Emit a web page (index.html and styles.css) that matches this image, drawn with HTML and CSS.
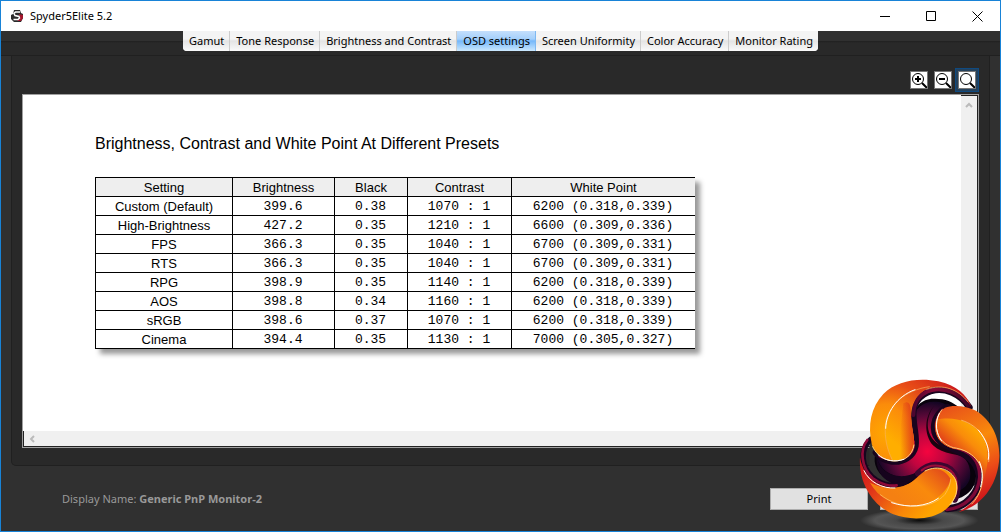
FILE: index.html
```
<!DOCTYPE html>
<html lang="en">
<head>
  <meta charset="UTF-8">
  <meta name="viewport" content="width=device-width, initial-scale=1.0">
  <title>Spyder5Elite 5.2</title>
  <link rel="stylesheet" href="styles.css">
</head>
<body>
  <div class="window">
    <header class="titlebar">
      <svg class="app-icon" viewBox="0 0 14 14">
        <path d="M4 1h6l1 3 2 1v4l-2 4H4L1 10V6l2-1z" fill="#2b2b2b"/>
        <path d="M9 5l4 1v3l-2 3H7l3-2z" fill="#a3152c"/>
        <path d="M10 3H5.500L4 4.500 5 6.500l4 1 .5 1.500L8 10.500H3.500" fill="none" stroke="#fff" stroke-width="1.500"/>
      </svg>
      <h1 class="app-name">Spyder5Elite 5.2</h1>
      <button class="win-btn" aria-label="Minimize">
        <svg viewBox="0 0 11 11"><path d="M0 5.500h10"/></svg>
      </button>
      <button class="win-btn" aria-label="Maximize">
        <svg viewBox="0 0 11 11"><path d="M.5.5h9v9h-9z"/></svg>
      </button>
      <button class="win-btn" aria-label="Close window">
        <svg viewBox="0 0 11 11"><path d="M.5.5l10 10M10.500.5l-10 10"/></svg>
      </button>
    </header>

    <nav class="tab-strip">
      <div class="tabs">
        <button class="tab">Gamut</button>
        <button class="tab">Tone Response</button>
        <button class="tab">Brightness and Contrast</button>
        <button class="tab active">OSD settings</button>
        <button class="tab">Screen Uniformity</button>
        <button class="tab">Color Accuracy</button>
        <button class="tab">Monitor Rating</button>
      </div>
    </nav>

    <main class="panel">
      <div class="tools">
        <button class="tool" aria-label="Zoom in">
          <svg viewBox="0 0 16 16"><circle cx="7" cy="7" r="5.500"/><path d="M11 11l5 5" class="thick"/><path d="M4 7h6M7 4v6" class="thick"/></svg>
        </button>
        <button class="tool" aria-label="Zoom out">
          <svg viewBox="0 0 16 16"><circle cx="7" cy="7" r="5.500"/><path d="M11 11l5 5" class="thick"/><path d="M4 7h6" class="thick"/></svg>
        </button>
        <button class="tool selected" aria-label="Zoom to fit">
          <svg viewBox="0 0 16 16"><circle cx="7" cy="7" r="5.500"/><path d="M11 11l5 5" class="thick"/></svg>
        </button>
      </div>

      <div class="viewer">
        <section class="report">
          <h2 class="report-title">Brightness, Contrast and White Point At Different Presets</h2>
          <table class="results">
            <colgroup>
              <col class="col-setting">
              <col class="col-brightness">
              <col class="col-black">
              <col class="col-contrast">
              <col class="col-white">
            </colgroup>
            <thead>
              <tr><th>Setting</th><th>Brightness</th><th>Black</th><th>Contrast</th><th>White Point</th></tr>
            </thead>
            <tbody>
              <tr><th>Custom (Default)</th><td>399.6</td><td>0.38</td><td>1070 : 1</td><td>6200 (0.318,0.339)</td></tr>
              <tr><th>High-Brightness</th><td>427.2</td><td>0.35</td><td>1210 : 1</td><td>6600 (0.309,0.336)</td></tr>
              <tr><th>FPS</th><td>366.3</td><td>0.35</td><td>1040 : 1</td><td>6700 (0.309,0.331)</td></tr>
              <tr><th>RTS</th><td>366.3</td><td>0.35</td><td>1040 : 1</td><td>6700 (0.309,0.331)</td></tr>
              <tr><th>RPG</th><td>398.9</td><td>0.35</td><td>1140 : 1</td><td>6200 (0.318,0.339)</td></tr>
              <tr><th>AOS</th><td>398.8</td><td>0.34</td><td>1160 : 1</td><td>6200 (0.318,0.339)</td></tr>
              <tr><th>sRGB</th><td>398.6</td><td>0.37</td><td>1070 : 1</td><td>6200 (0.318,0.339)</td></tr>
              <tr><th>Cinema</th><td>394.4</td><td>0.35</td><td>1130 : 1</td><td>7000 (0.305,0.327)</td></tr>
            </tbody>
          </table>
        </section>
        <div class="scroll-v">
          <svg viewBox="0 0 8 8"><path d="M1 6l3-3 3 3"/></svg>
        </div>
        <div class="scroll-h">
          <svg viewBox="0 0 8 8"><path d="M6 1L3 4l3 3"/></svg>
        </div>
      </div>
    </main>

    <footer class="footer">
      <p class="display-name">Display Name: <b>Generic PnP Monitor-2</b></p>
      <button class="btn">Print</button>
      <button class="btn" aria-label="Close"></button>
    </footer>
  </div>

  <svg class="logo" viewBox="0 0 453 486">
    <defs>
      <radialGradient id="core" gradientUnits="userSpaceOnUse" cx="232" cy="245" r="150">
        <stop offset="0" stop-color="#f5043f"/>
        <stop offset=".35" stop-color="#c0053f"/>
        <stop offset=".7" stop-color="#5c0838"/>
        <stop offset="1" stop-color="#150524"/>
      </radialGradient>
      <radialGradient id="floor">
        <stop offset="0" stop-color="#0c0c0c"/>
        <stop offset=".4" stop-color="#484848"/>
        <stop offset=".75" stop-color="#555"/>
        <stop offset="1" stop-color="#555" stop-opacity="0"/>
      </radialGradient>
      <!-- blades go from amber inside to red at the outer edge -->
      <radialGradient id="blade1" gradientUnits="userSpaceOnUse" cx="110" cy="190" r="250">
        <stop offset="0" stop-color="#ffa800"/>
        <stop offset=".35" stop-color="#fb8c0a"/>
        <stop offset=".6" stop-color="#e94f17"/>
        <stop offset="1" stop-color="#cc1a1c"/>
      </radialGradient>
      <linearGradient id="edge2" gradientUnits="userSpaceOnUse" x1="290" y1="110" x2="420" y2="390">
        <stop offset="0" stop-color="#e8501a"/>
        <stop offset=".4" stop-color="#f98a0b"/>
        <stop offset=".7" stop-color="#ec4c18"/>
        <stop offset="1" stop-color="#cc0f1a"/>
      </linearGradient>
      <linearGradient id="edge3" gradientUnits="userSpaceOnUse" x1="30" y1="280" x2="220" y2="450">
        <stop offset="0" stop-color="#cf101b"/>
        <stop offset=".35" stop-color="#e23a19"/>
        <stop offset=".75" stop-color="#f98708"/>
        <stop offset="1" stop-color="#ffa400"/>
      </linearGradient>
      <linearGradient id="face1" gradientUnits="userSpaceOnUse" x1="110" y1="200" x2="215" y2="70">
        <stop offset="0" stop-color="#ffae00"/>
        <stop offset=".5" stop-color="#fb8c0a"/>
        <stop offset="1" stop-color="#e2461a"/>
      </linearGradient>
      <linearGradient id="shade1" gradientUnits="userSpaceOnUse" x1="150" y1="200" x2="200" y2="200">
        <stop offset="0" stop-color="#dc2f1a" stop-opacity="0"/>
        <stop offset="1" stop-color="#dc2f1a"/>
      </linearGradient>
      <linearGradient id="face2" gradientUnits="userSpaceOnUse" x1="380" y1="165" x2="310" y2="240">
        <stop offset="0" stop-color="#ffae00"/>
        <stop offset=".5" stop-color="#f98c0a"/>
        <stop offset="1" stop-color="#e2441a"/>
      </linearGradient>
      <linearGradient id="face3" gradientUnits="userSpaceOnUse" x1="270" y1="300" x2="170" y2="410">
        <stop offset="0" stop-color="#e4501a"/>
        <stop offset=".5" stop-color="#f98a0c"/>
        <stop offset="1" stop-color="#f58012"/>
      </linearGradient>
      <linearGradient id="rim1" gradientUnits="userSpaceOnUse" x1="190" y1="120" x2="365" y2="100">
        <stop offset="0" stop-color="#4c0630"/>
        <stop offset=".4" stop-color="#8a0a38"/>
        <stop offset="1" stop-color="#3a0526"/>
      </linearGradient>
    </defs>

    <ellipse cx="208" cy="451" rx="178" ry="34" fill="url(#floor)"/>

    <!-- openings between the blades -->
    <path d="M215 95C240 60 310 60 336 112C300 112 265 108 215 95Z" fill="#fff"/>
    <path d="M58 215H85V300H58Z" fill="#303030"/>
    <path d="M305 403L320 370 375 345 382 390 330 410Z" fill="#e9e9e9"/>

    <!-- black depth and hub -->
    <path d="M190 150C188 112 215 86 250 86C285 85 308 96 325 110L270 130L268 200L340 250C375 275 387 312 372 345C360 370 342 380 318 388L310 320L250 300L185 342C135 352 88 325 76 285C72 270 74 256 78 245L150 275L195 230Z" fill="#08020c"/>
    <path d="M190 145C195 115 220 94 252 95C275 95 285 100 292 110C255 120 243 145 246 175C250 215 285 240 320 250C350 262 365 290 360 325C354 345 340 358 326 362C325 325 300 298 262 292C215 288 205 325 160 322C122 320 88 298 78 258C100 276 135 283 165 272C198 258 196 220 190 190Z" fill="url(#core)"/>
    <path d="M252 108C225 145 225 198 268 224C300 242 340 238 362 268C325 250 280 256 249 226C220 192 224 138 252 108Z" fill="#19030f"/>
    <path d="M80 255C85 300 122 322 165 318C205 314 215 285 255 283C215 290 205 340 150 345C100 340 75 300 80 255Z" fill="#16041d"/>

    <!-- rims under the blade edges -->
    <g fill="none" stroke-linecap="round">
      <path d="M358 112C330 70 285 52 245 62C205 75 186 105 190 145C192 180 200 200 196 228C190 258 160 278 126 274C105 272 88 262 78 248" stroke="#18041e" stroke-width="20"/>
      <path d="M355 108C328 68 285 52 245 60C208 70 190 98 190 135" stroke="url(#rim1)" stroke-width="12"/>
      <path d="M190 215C194 258 150 282 90 258" stroke="#a10b36" stroke-width="10"/>
      <path d="M292 112C248 135 240 188 275 218C315 245 378 252 388 315C390 365 350 415 292 416" stroke="#18041e" stroke-width="21"/>
      <path d="M278 121C245 160 255 210 308 231C360 240 390 270 389 322C385 375 345 413 290 419" stroke="#7d0937" stroke-width="10"/>
      <path d="M62 208C28 240 35 290 66 320C98 348 140 352 165 342" stroke="#18041e" stroke-width="16"/>
      <path d="M52 210C28 240 34 294 68 325C90 342 120 350 140 346" stroke="#8c0a38" stroke-width="8"/>
      <path d="M205 310C245 270 305 282 319 325C325 350 322 370 314 388" stroke="#3c0730" stroke-width="20"/>
      <path d="M215 301C250 274 304 288 318 325C323 345 321 365 315 380" stroke="#9c0c39" stroke-width="6"/>
    </g>

    <!-- upper left blade -->
    <path d="M66 225C52 165 63 112 100 72C140 32 205 22 265 34C320 46 350 75 364 110C335 66 292 47 248 52C205 62 180 98 183 145C184 180 197 205 190 232C184 258 158 275 126 272C96 268 76 250 66 225Z" fill="url(#blade1)"/>
    <path d="M126 270C106 225 98 160 118 118C142 72 195 48 242 52C204 64 181 100 184 148C186 184 196 205 190 232C184 258 158 275 126 270Z" fill="url(#face1)"/>
    <path d="M160 100C185 85 182 120 184 148C186 184 196 205 190 232C184 258 158 275 140 270Z" fill="url(#shade1)"/>

    <!-- right blade -->
    <path d="M285 113C310 103 350 108 378 122C425 150 450 205 448 262C444 345 395 410 326 426C372 402 400 360 397 318C394 265 360 243 322 238C280 232 252 205 256 165C259 140 268 124 285 113Z" fill="url(#edge2)"/>
    <path d="M258 150C305 138 360 150 390 190C415 222 422 270 400 330C396 270 360 244 322 238C280 232 250 205 258 150Z" fill="url(#face2)"/>

    <!-- lower blade -->
    <path d="M30 262C38 315 80 352 130 354C180 354 200 318 225 303C260 284 305 298 319 332C330 368 310 400 284 421C245 450 180 452 130 433C65 405 25 335 30 262Z" fill="url(#edge3)"/>
    <path d="M60 338C115 366 175 353 205 320C240 284 285 292 302 328C290 375 235 411 175 408C130 403 85 384 60 338Z" fill="url(#face3)"/>

    <!-- highlights -->
    <g fill="none" stroke-linecap="round">
      <path d="M126 268C110 235 104 205 106 165C114 105 165 60 238 50" stroke="#f9b45a" stroke-width="2"/>
      <path d="M107 175C108 130 140 78 195 59" stroke="#fff" stroke-width="3"/>
      <path d="M68 230C85 268 130 285 168 264C182 255 190 240 192 225" stroke="#ffd879" stroke-width="3"/>
      <path d="M84 254C105 273 135 277 162 268" stroke="#fff" stroke-width="3"/>
      <path d="M230 58C280 40 325 58 354 96" stroke="#ffc46b" stroke-width="2"/>
      <path d="M335 151C385 165 424 215 416 275" stroke="#ffd27e" stroke-width="2"/>
      <path d="M385 180C410 210 420 240 415 268" stroke="#fff" stroke-width="3"/>
      <path d="M276 119C242 160 260 218 310 233C365 240 405 280 397 335C393 365 378 390 365 402" stroke="#ffc873" stroke-width="3"/>
      <path d="M268 130C252 160 260 195 275 213M388 275C398 295 399 325 392 350" stroke="#fff" stroke-width="3"/>
      <path d="M91 374C150 422 245 420 285 373C296 357 301 342 302 328" stroke="#ffc66a" stroke-width="2"/>
      <path d="M125 398C175 415 230 410 265 385" stroke="#fff" stroke-width="3"/>
      <path d="M225 303C265 282 310 300 319 338C324 366 316 385 300 404" stroke="#ffd57a" stroke-width="3"/>
      <path d="M42 302C58 336 95 356 135 354" stroke="#fff" stroke-width="3"/>
    </g>
  </svg>
</body>
</html>
```
FILE: styles.css
```
* {
  box-sizing: border-box;
}

body {
  margin: 0;
  font-family: "Noto Sans", "Open Sans", sans-serif;
  font-size: 11px;
  line-height: 16px;
  color: #000;
}

button {
  margin: 0;
  padding: 0;
  border: none;
  background: none;
  font: inherit;
  color: inherit;
}

h1, h2, p {
  margin: 0;
}

.window {
  display: flex;
  flex-direction: column;
  min-height: 100vh;
  border: 1px solid #1883d7;
  background: #303030;
}

/* title bar */
.titlebar {
  display: flex;
  align-items: center;
  height: 30px;
  padding-left: 9px;
  background: #fff;
}

.app-icon {
  width: 14px;
  height: 14px;
}

.app-name {
  flex: 1;
  margin-left: 6px;
  font-size: 11px;
  font-weight: normal;
}

.win-btn {
  display: flex;
  align-items: center;
  justify-content: center;
  width: 46px;
  height: 30px;
}

.win-btn svg {
  width: 11px;
  height: 11px;
  fill: none;
  stroke: #000;
}

/* tabs */
.tab-strip {
  display: flex;
  justify-content: center;
  height: 25px;
  border-bottom: 1px solid #202020;
  background: linear-gradient(#303030 10px, #202020 10px, #292929 12px);
}

.tabs {
  display: flex;
  height: 20px;
  border-radius: 0 0 4px 4px;
  background: #f0f0f0;
  overflow: hidden;
}

.tab {
  padding: 0 5px 0 6px;
  border-right: 1px solid #ccc;
  background: linear-gradient(#f4f4f4 40%, #e4e4e4 50%, #fafafa);
  white-space: nowrap;
}

.tab:last-child {
  border-right: none;
}

.tab.active {
  border-right-color: #7eb9f2;
  background: linear-gradient(#c4dffc, #a5d0fb 40%, #76b8fa 50%, #cbe8fe);
}

/* report panel */
.panel {
  display: flex;
  flex: 1;
  flex-direction: column;
  margin: 0 10px;
  padding: 12px 10px 17px;
  border: 1px solid #202020;
  border-top: none;
  border-radius: 0 0 5px 5px;
  background: #292929;
}

.tools {
  display: flex;
  justify-content: flex-end;
  align-items: center;
  gap: 6px;
  height: 24px;
  margin-bottom: 2px;
  padding-right: 3px;
}

.tool {
  width: 18px;
  height: 18px;
  border: 1px solid #777;
  background: #fff;
}

.tool.selected {
  box-shadow: 0 0 0 2px #24415c, 0 0 0 3px #0f4a80;
}

.tool svg {
  display: block;
  width: 16px;
  height: 16px;
  fill: none;
  stroke: #000;
}

.tool .thick {
  stroke-width: 2;
}

.viewer {
  display: grid;
  flex: 1;
  grid-template-columns: 1fr 17px;
  grid-template-rows: 1fr 16px;
  border: 1px solid #a0a0a0;
  background: #fff;
}

.report {
  padding: 39px 72px 24px;
}

.report-title {
  font-family: "Liberation Sans", Arial, sans-serif;
  font-size: 16px;
  font-weight: normal;
  line-height: 20px;
}

.results {
  margin-top: 23px;
  border-collapse: collapse;
  table-layout: fixed;
  width: 600px;
  box-shadow: 5px 5px 5px #999;
  background: #fff;
  text-align: center;
}

.col-setting {
  width: 137px;
}

.col-brightness {
  width: 102px;
}

.col-black {
  width: 73px;
}

.col-contrast {
  width: 104px;
}

.results th,
.results td {
  height: 19px;
  padding: 2px 0 0;
  border: 1px solid #000;
  border-right: none;
  font-size: 13px;
  line-height: 16px;
}

.results th {
  font-family: "Liberation Sans", Arial, sans-serif;
  font-weight: normal;
}

.results td {
  padding-right: 1px;
  font-family: "Liberation Mono", "Courier New", monospace;
}

.results thead {
  background: #eee;
}

.scroll-v,
.scroll-h {
  display: flex;
  background: #f0f0f0;
}

.scroll-v {
  justify-content: center;
  padding-top: 5px;
  border-top: 1px solid #222;
  border-right: 1px solid #222;
}

.scroll-h {
  grid-column: 1 / 3;
  align-items: center;
  padding-left: 4px;
  border-left: 1px solid #222;
  border-bottom: 1px solid #222;
}

.scroll-v svg,
.scroll-h svg {
  width: 8px;
  height: 8px;
  fill: none;
  stroke: #bbb;
  stroke-width: 2;
}

/* footer */
.footer {
  display: flex;
  align-items: center;
  gap: 12px;
  height: 65px;
  padding: 1px 22px 0 61px;
}

.display-name {
  flex: 1;
  color: #999;
}

.btn {
  width: 98px;
  height: 22px;
  border: 1px solid #adadad;
  background: #e1e1e1;
}

.logo {
  position: absolute;
  right: 0;
  bottom: 0;
  width: 151px;
  height: 162px;
}
```
